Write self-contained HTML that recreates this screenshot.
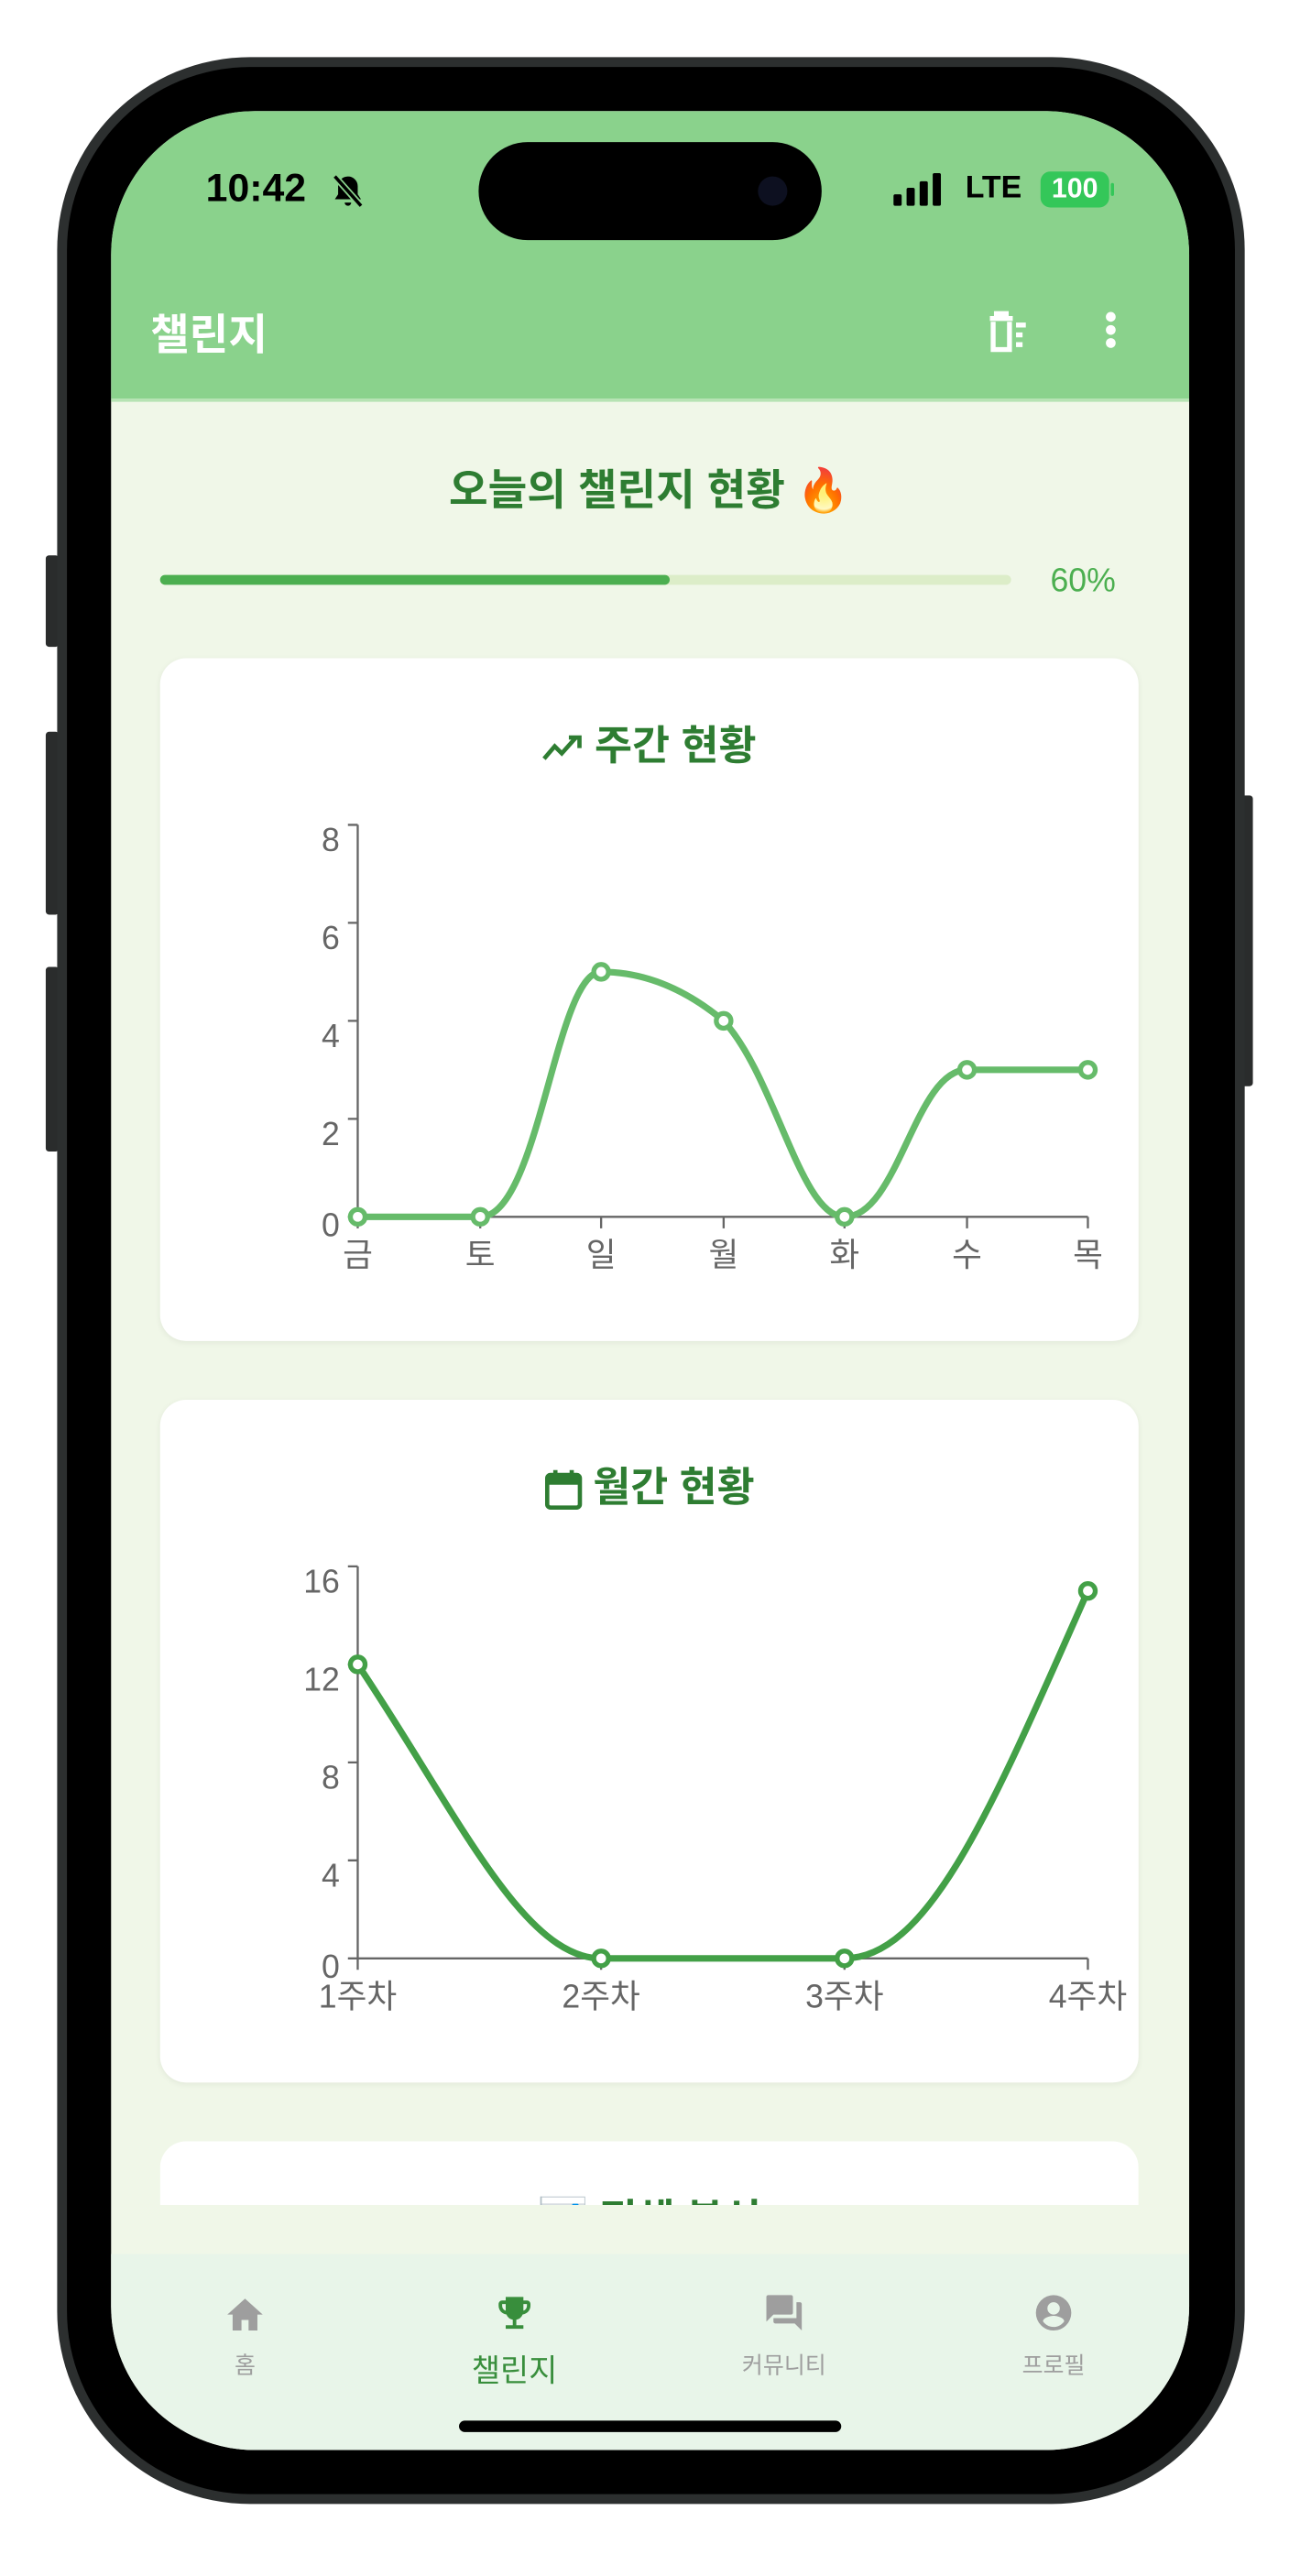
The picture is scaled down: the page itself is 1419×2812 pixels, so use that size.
<!DOCTYPE html>
<html><head><meta charset="utf-8"><style>
html,body{margin:0;padding:0;background:#fff;width:1419px;height:2796px;overflow:hidden}
#s{position:absolute;left:0;top:0;width:800px;height:1577px;transform:scale(1.783);transform-origin:0 0;font-family:"Liberation Sans","Noto Sans CJK KR",sans-serif}
.abs{position:absolute}
.t{color:#2e7d32;font-weight:bold;text-align:center}
.card{position:absolute;left:98px;width:599px;background:#fff;border-radius:16px;box-shadow:0 1px 4px rgba(0,0,0,.06)}
svg text{font-family:"Liberation Sans","Noto Sans CJK KR",sans-serif}
</style></head><body><div id="s">
<div class="abs" style="left:28px;top:340px;width:8px;height:56px;background:#2a2c2c;border-radius:2px"></div>
<div class="abs" style="left:28px;top:448px;width:8px;height:112px;background:#2a2c2c;border-radius:2px"></div>
<div class="abs" style="left:28px;top:592px;width:8px;height:113px;background:#2a2c2c;border-radius:2px"></div>
<div class="abs" style="left:760px;top:487px;width:7px;height:178px;background:#2a2c2c;border-radius:2px"></div>
<div class="abs" style="left:35px;top:35px;width:727px;height:1498px;background:#2c2f2f;border-radius:118px"></div>
<div class="abs" style="left:41px;top:41px;width:715px;height:1486px;background:#000;border-radius:112px"></div>
<div class="abs" style="left:68px;top:68px;width:660px;height:1432px;border-radius:88px;overflow:hidden;background:#f0f7e8">
  <div class="abs" style="left:0;top:0;width:660px;height:176px;background:#8ad28c"></div>
  <div class="abs" style="left:58px;top:34px;font-size:24px;font-weight:bold;color:#000">10:42</div>
  <svg class="abs" style="left:133px;top:37px" width="24" height="24" viewBox="0 0 24 24"><path d="M12 3a6 6 0 0 0-6 6v5l-2 3h16l-2-3V9a6 6 0 0 0-6-6zM10 19a2 2 0 0 0 4 0z" fill="#000"/><path d="M4 3l16 18" stroke="#8ad28c" stroke-width="4"/><path d="M4 3l16 18" stroke="#000" stroke-width="2"/></svg>
  <div class="abs" style="left:225px;top:19px;width:210px;height:60px;background:#000;border-radius:30px"></div>
  <div class="abs" style="left:396px;top:40px;width:18px;height:18px;background:#0d1020;border-radius:50%"></div>
  <div class="abs" style="left:479px;top:51px;width:5px;height:7px;background:#000;border-radius:1px"></div>
  <div class="abs" style="left:487px;top:47px;width:5px;height:11px;background:#000;border-radius:1px"></div>
  <div class="abs" style="left:495px;top:43px;width:5px;height:15px;background:#000;border-radius:1px"></div>
  <div class="abs" style="left:503px;top:38px;width:5px;height:20px;background:#000;border-radius:1px"></div>
  <div class="abs" style="left:523px;top:37px;font-size:19px;font-weight:bold;color:#000">LTE</div>
  <div class="abs" style="left:569px;top:37px;width:42px;height:22px;background:#34c759;border-radius:6px;color:#fff;font-size:17px;font-weight:bold;text-align:center;line-height:22px">100</div>
  <div class="abs" style="left:612px;top:44px;width:2px;height:8px;background:#34c759;border-radius:1px"></div>
  <div class="abs" style="left:24px;top:117px;font-size:26px;font-weight:bold;color:#fff">챌린지</div>
  <svg class="abs" style="left:536px;top:122px" width="30" height="28" viewBox="0 0 30 28"><path d="M2 5h14M6 5V2h6v3M4 7v17h10V7" stroke="#fff" stroke-width="3" fill="none"/><path d="M18 9h6M18 15h4M18 21h4" stroke="#fff" stroke-width="3"/></svg>
  <div class="abs" style="left:609px;top:123px;width:6px;height:6px;background:#fff;border-radius:50%"></div>
  <div class="abs" style="left:609px;top:131px;width:6px;height:6px;background:#fff;border-radius:50%"></div>
  <div class="abs" style="left:609px;top:139px;width:6px;height:6px;background:#fff;border-radius:50%"></div>
  <div class="abs" style="left:0;top:176px;width:660px;height:2px;background:#b6e3b3"></div>
</div>
<div class="abs t" style="left:98px;top:280px;width:599px;font-size:26px">오늘의 챌린지 현황 🔥</div>
<div class="abs" style="left:98px;top:352px;width:521px;height:6px;background:#dcedc8;border-radius:3px"></div>
<div class="abs" style="left:98px;top:352px;width:312px;height:6px;background:#4caf50;border-radius:3px"></div>
<div class="abs" style="left:643px;top:345px;font-size:20px;color:#4caf50">60%</div>

<div class="card" style="top:403px;height:418px"></div>
<div class="abs t" style="left:98px;top:437px;width:599px;font-size:25px"><svg width="26" height="18" viewBox="0 0 24 16" style="vertical-align:middle;margin-right:6px"><path d="M1 14l6-7 4 4 8-9" stroke="#2e7d32" stroke-width="2.4" fill="none"/><path d="M15 2h6v6" stroke="#2e7d32" stroke-width="2.4" fill="none"/></svg>주간 현황</div>
<svg class="abs" style="left:0;top:0" width="800" height="1577">
 <g stroke="#666" stroke-width="1.3" fill="none">
  <path d="M219 505V745H666"/>
  <path d="M213 505h6M213 565h6M213 625h6M213 685h6M213 745h6"/>
  <path d="M219 745v7M294 745v7M368 745v7M443 745v7M517 745v7M592 745v7M666 745v7"/>
 </g>
 <g font-size="20" fill="#666" text-anchor="end">
  <text x="208" y="521">8</text><text x="208" y="581">6</text><text x="208" y="641">4</text><text x="208" y="701">2</text><text x="208" y="757">0</text>
 </g>
 <g font-size="20" fill="#666" text-anchor="middle">
  <text x="219" y="775">금</text><text x="294" y="775">토</text><text x="368" y="775">일</text><text x="443" y="775">월</text><text x="517" y="775">화</text><text x="592" y="775">수</text><text x="666" y="775">목</text>
 </g>
 <path d="M219 745L294 745C330 745 340 595 368 595C400 595 425 610 443 625C475 660 490 745 517 745C550 745 560 655 592 655L666 655" stroke="#66bb6a" stroke-width="4" fill="none"/>
 <g fill="#fff" stroke="#66bb6a" stroke-width="3">
  <circle cx="219" cy="745" r="4.5"/><circle cx="294" cy="745" r="4.5"/><circle cx="368" cy="595" r="4.5"/><circle cx="443" cy="625" r="4.5"/><circle cx="517" cy="745" r="4.5"/><circle cx="592" cy="655" r="4.5"/><circle cx="666" cy="655" r="4.5"/>
 </g>
</svg>

<div class="card" style="top:857px;height:418px"></div>
<div class="abs t" style="left:98px;top:891px;width:599px;font-size:25px"><svg width="24" height="26" viewBox="0 0 24 26" style="vertical-align:middle;margin-right:6px"><rect x="2" y="4" width="20" height="20" rx="2" stroke="#2e7d32" stroke-width="2.6" fill="none"/><rect x="2" y="4" width="20" height="6" fill="#2e7d32"/><path d="M7 1v5M17 1v5" stroke="#2e7d32" stroke-width="2.6"/></svg>월간 현황</div>
<svg class="abs" style="left:0;top:0" width="800" height="1577">
 <g stroke="#666" stroke-width="1.3" fill="none">
  <path d="M219 959V1199H666"/>
  <path d="M213 959h6M213 1019h6M213 1079h6M213 1139h6M213 1199h6"/>
  <path d="M219 1199v7M368 1199v7M517 1199v7M666 1199v7"/>
 </g>
 <g font-size="20" fill="#666" text-anchor="end">
  <text x="208" y="975">16</text><text x="208" y="1035">12</text><text x="208" y="1095">8</text><text x="208" y="1155">4</text><text x="208" y="1211">0</text>
 </g>
 <g font-size="20" fill="#666" text-anchor="middle">
  <text x="219" y="1229">1주차</text><text x="368" y="1229">2주차</text><text x="517" y="1229">3주차</text><text x="666" y="1229">4주차</text>
 </g>
 <path d="M219 1019C280 1110 320 1199 368 1199L517 1199C570 1199 610 1100 666 974" stroke="#43a047" stroke-width="4" fill="none"/>
 <g fill="#fff" stroke="#43a047" stroke-width="3">
  <circle cx="219" cy="1019" r="4.5"/><circle cx="368" cy="1199" r="4.5"/><circle cx="517" cy="1199" r="4.5"/><circle cx="666" cy="974" r="4.5"/>
 </g>
</svg>

<div class="abs" style="left:98px;top:1311px;width:599px;height:39px;overflow:hidden">
 <div style="position:absolute;left:0;top:0;width:599px;height:80px;background:#fff;border-radius:16px"></div>
 <div class="t" style="position:absolute;left:0;top:28px;width:599px;font-size:25px">📊 전체 분석</div>
</div>
<div class="abs" style="left:68px;top:1380px;width:660px;height:120px;background:#e8f5e9;border-radius:0 0 88px 88px"></div>
<svg class="abs" style="left:137px;top:1404px" width="26" height="24" viewBox="0 0 24 22"><path d="M10 21v-6h4v6h5v-9h3L12 3 2 12h3v9z" fill="#9e9e9e"/></svg>
<div class="abs" style="left:120px;top:1438px;width:60px;text-align:center;font-size:14px;color:#9e9e9e">홈</div>
<svg class="abs" style="left:302px;top:1403px" width="26" height="26" viewBox="0 0 24 24"><path d="M19 5h-2V3H7v2H5c-1.1 0-2 .9-2 2v1c0 2.5 1.9 4.6 4.4 4.9A5 5 0 0 0 11 15.9V19H7v2h10v-2h-4v-3.1a5 5 0 0 0 3.6-3C19.1 12.6 21 10.5 21 8V7c0-1.1-.9-2-2-2zM5 8V7h2v3.8C5.8 10.4 5 9.300 5 8zm14 0c0 1.3-.8 2.4-2 2.8V7h2z" fill="#388e3c"/></svg>
<div class="abs" style="left:265px;top:1437px;width:100px;text-align:center;font-size:19px;color:#388e3c">챌린지</div>
<svg class="abs" style="left:467px;top:1403px" width="26" height="26" viewBox="0 0 24 24"><path d="M21 6h-2v9H6v2c0 .55.45 1 1 1h11l4 4V7c0-.55-.45-1-1-1zm-4 6V3c0-.55-.45-1-1-1H3c-.55 0-1 .45-1 1v14l4-4h10c.55 0 1-.45 1-1z" fill="#9e9e9e"/></svg>
<div class="abs" style="left:430px;top:1438px;width:100px;text-align:center;font-size:14px;color:#9e9e9e">커뮤니티</div>
<svg class="abs" style="left:632px;top:1403px" width="26" height="26" viewBox="0 0 24 24"><path d="M12 2a10 10 0 1 0 0 20 10 10 0 0 0 0-20zm0 4a3.5 3.5 0 1 1 0 7 3.5 3.5 0 0 1 0-7zm0 14c-2.5 0-4.7-1.3-6-3.2 0-2 4-3.1 6-3.1s6 1.1 6 3.1c-1.3 1.9-3.5 3.2-6 3.2z" fill="#9e9e9e"/></svg>
<div class="abs" style="left:595px;top:1438px;width:100px;text-align:center;font-size:14px;color:#9e9e9e">프로필</div>
<div class="abs" style="left:281px;top:1482px;width:234px;height:7px;background:#000;border-radius:4px"></div>
</div></body></html>
